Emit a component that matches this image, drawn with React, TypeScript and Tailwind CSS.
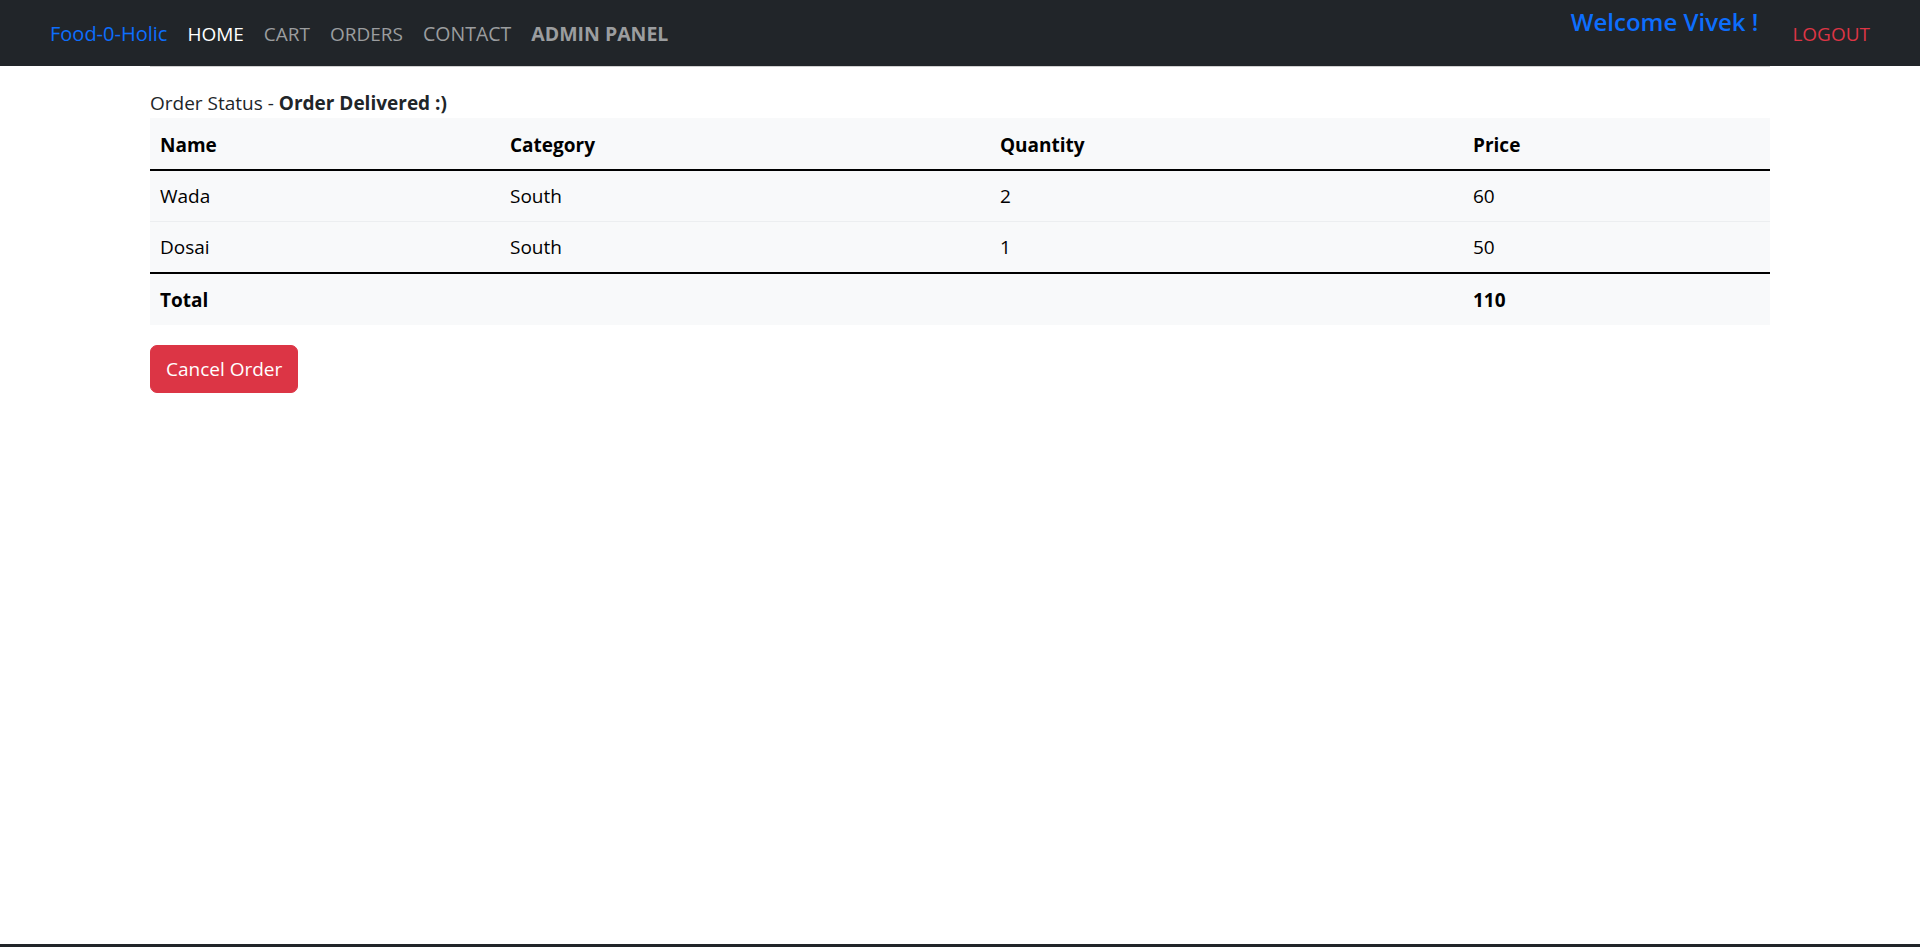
import React from "react";

const font = { fontFamily: '"Open Sans", "Noto Sans", sans-serif' };

export default function App() {
  return (
    <div className="h-[947px] flex flex-col bg-white text-[#212529]" style={font}>
      <nav className="h-[66px] bg-[#212529] flex items-center justify-between px-[50px] shrink-0">
        <div className="flex items-center gap-[20px] text-[19px] leading-[30px] pt-[2px]">
          <span className="text-[#0d6efd] text-[20px]">Food-0-Holic</span>
          <span className="text-white">HOME</span>
          <span className="text-[#9b9d9f]">CART</span>
          <span className="text-[#9b9d9f]">ORDERS</span>
          <span className="text-[#9b9d9f] text-[19.5px]">CONTACT</span>
          <span className="text-[#9b9d9f] font-bold text-[19.5px]">ADMIN PANEL</span>
        </div>
        <div className="flex items-start gap-[34px]">
          <span className="text-[#0d6efd] text-[24px] leading-[30px] font-semibold -mt-[10px]">Welcome Vivek !</span>
          <span className="text-[#dc3545] text-[19px] leading-[30px] pt-[2px]">LOGOUT</span>
        </div>
      </nav>
      <div className="w-[1620px] mx-auto border-t border-[#d0d0d0]">
        <div className="pt-[21px] text-[19px] leading-[30px]">
          Order Status - <span className="font-bold">Order Delivered :)</span>
        </div>
        <table className="w-full border-collapse bg-[#f8f9fa] text-black text-[19px] leading-[30px] mb-[20px]">
          <thead>
            <tr className="border-b-2 border-black">
              <th className="w-[350px] text-left font-bold px-[10px] pt-[12px] pb-[9px]">Name</th>
              <th className="w-[490px] text-left font-bold px-[10px] pt-[12px] pb-[9px]">Category</th>
              <th className="w-[473px] text-left font-bold px-[10px] pt-[12px] pb-[9px]">Quantity</th>
              <th className="text-left font-bold px-[10px] pt-[12px] pb-[9px]">Price</th>
            </tr>
          </thead>
          <tbody>
            <tr className="border-b border-[#eceef0]">
              <td className="px-[10px] py-[10px]">Wada</td>
              <td className="px-[10px] py-[10px]">South</td>
              <td className="px-[10px] py-[10px]">2</td>
              <td className="px-[10px] py-[10px]">60</td>
            </tr>
            <tr className="border-b-2 border-black">
              <td className="px-[10px] py-[10px]">Dosai</td>
              <td className="px-[10px] py-[10px]">South</td>
              <td className="px-[10px] py-[10px]">1</td>
              <td className="px-[10px] py-[10px]">50</td>
            </tr>
          </tbody>
          <tfoot>
            <tr>
              <td className="px-[10px] pt-[11px] pb-[10px] font-bold">Total</td>
              <td className="px-[10px]"></td>
              <td className="px-[10px]"></td>
              <td className="px-[10px] pt-[11px] pb-[10px] font-bold">110</td>
            </tr>
          </tfoot>
        </table>
        <button className="bg-[#dc3545] text-white text-[19px] leading-[30px] px-[15px] py-[8px] rounded-[7px] border border-[#dc3545]">
          Cancel Order
        </button>
      </div>
      <div className="mt-auto h-[3px] bg-[#212529] shrink-0"></div>
    </div>
  );
}
